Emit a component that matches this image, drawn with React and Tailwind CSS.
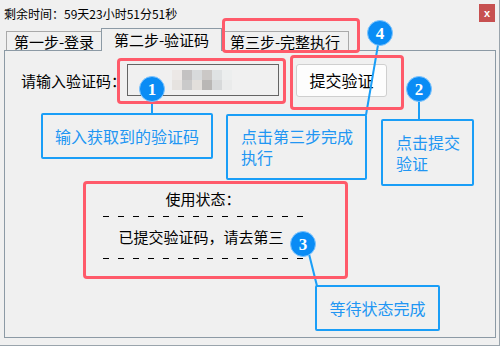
import React from 'react';

const cjk = { fontFamily: '"Noto Sans CJK SC", "Noto Sans", sans-serif' };

const mosaic = [
  ['#ece8e6', '#c4c2c2', '#d8dadb', '#cbc8c6', '#dfe2e3', '#eceeee'],
  ['#e6e3e0', '#cacaca', '#e2dfdb', '#b9b7b5', '#d7d9da', '#eaebeb'],
];

const Dashes = () => (
  <div className="flex justify-between items-end h-[6px] w-[200px]">
    {Array.from({ length: 14 }).map((_, i) => (
      <span key={i} className="block w-[6px] h-px bg-black" />
    ))}
  </div>
);

const Badge = ({ n, className }) => (
  <div
    className={`absolute w-[26px] h-[26px] rounded-full bg-[#0a8cf5] border border-[#7cc4ff] text-white text-[17px] font-bold flex items-center justify-center leading-none ${className}`}
    style={{ fontFamily: '"Liberation Serif", serif' }}
  >
    {n}
  </div>
);

export default function App() {
  return (
    <div
      className="relative w-[500px] h-[346px] bg-[#f0f0f0] overflow-hidden text-black flex flex-col border-r border-b border-[#9aa4ac]"
      style={cjk}
    >
      {/* title bar */}
      <div className="flex justify-between items-start h-[28px] pl-[4px] pr-[4px]">
        <span className="text-[12px] leading-none mt-[8px]">剩余时间：59天23小时51分51秒</span>
        <div className="mt-[4px] w-[16px] h-[18px] bg-[#c75050] text-white text-[11px] font-bold flex items-center justify-center leading-none" style={{ fontFamily: '"Liberation Sans", sans-serif' }}>
          x
        </div>
      </div>

      {/* tabs */}
      <div className="flex items-end h-[22px] pl-[6px] relative z-10">
        <div className="w-[96px] h-[19px] border border-b-0 border-[#a9a9a9] text-[15px] leading-none flex items-center justify-center pt-[1px]">
          第一步-登录
        </div>
        <div className="w-[121px] h-[23px] -mb-px ml-[-1px] border border-b-0 border-[#8c9aa5] bg-[#f0f0f0] text-[15px] leading-none flex items-center justify-center pb-[2px]">
          第二步-验证码
        </div>
        <div className="w-[127px] h-[19px] border border-l-0 border-b-0 border-[#a9a9a9] text-[15px] leading-none flex items-center justify-center pt-[1px]">
          第三步-完整执行
        </div>
      </div>

      {/* panel */}
      <div className="mx-[4px] w-[492px] h-[288px] border border-[#8c9aa5] flex flex-col">
        <div className="flex items-center mt-[12px] h-[34px] pl-[16px]">
          <span className="w-[106px] text-[15px] leading-none">请输入验证码：</span>
          <div className="w-[152px] h-[32px] border border-[#646464] bg-[#f0f0f0] flex items-center pl-[44px]">
            <div className="flex flex-col blur-[0.6px]">
              {mosaic.map((row, r) => (
                <div key={r} className="flex">
                  {row.map((c, i) => (
                    <span key={i} className="block w-[10px] h-[10px]" style={{ background: c }} />
                  ))}
                </div>
              ))}
            </div>
          </div>
          <button className="ml-[17px] w-[91px] h-[33px] bg-[#fdfdfd] border border-[#cfcfcf] rounded-[3px] text-[16px] leading-none">
            提交验证
          </button>
        </div>

        <div className="ml-[98px] w-[200px] mt-[92px] flex flex-col items-center">
          <div className="h-[20px] text-[15px] leading-[20px]">使用状态：</div>
          <div className="mt-[2px]"><Dashes /></div>
          <div className="mt-[10px] h-[20px] text-[15px] leading-[20px] pr-[4px]">已提交验证码，请去第三</div>
          <div className="mt-[6px]"><Dashes /></div>
        </div>
      </div>

      {/* annotation overlay */}
      <svg className="absolute left-0 top-0 z-20" width="500" height="346">
        <g stroke="#1a9ef7" strokeWidth="2">
          <line x1="152" y1="100" x2="152" y2="114" />
          <line x1="419" y1="100" x2="419" y2="120" />
          <line x1="309" y1="254" x2="317" y2="286" />
          <line x1="378" y1="45" x2="366" y2="115" />
        </g>
      </svg>

      <div className="absolute z-20 left-[222px] top-[18px] w-[138px] h-[35px] border-[3px] border-[#ff5a6a] rounded-[4px]" />
      <div className="absolute z-20 left-[117px] top-[58px] w-[169px] h-[46px] border-[3px] border-[#ff5a6a] rounded-[4px]" />
      <div className="absolute z-20 left-[290px] top-[55px] w-[114px] h-[55px] border-[3px] border-[#ff5a6a] rounded-[4px]" />
      <div className="absolute z-20 left-[83px] top-[181px] w-[265px] h-[98px] border-[3px] border-[#ff5a6a] rounded-[4px]" />

      <div className="absolute z-20 left-[41px] top-[113px] w-[172px] h-[46px] border-2 border-[#1a9ef7] rounded-[2px] flex items-center justify-center text-[16px] text-[#2196f3] leading-none">
        输入获取到的验证码
      </div>
      <div className="absolute z-20 left-[226px] top-[114px] w-[141px] h-[66px] border-2 border-[#1a9ef7] rounded-[2px] pl-[13px] pt-[12px] flex flex-col gap-[5px] text-[16px] text-[#2196f3] leading-none">
        <span>点击第三步完成</span>
        <span>执行</span>
      </div>
      <div className="absolute z-20 left-[381px] top-[119px] w-[93px] h-[67px] border-2 border-[#1a9ef7] rounded-[2px] pl-[13px] pt-[13px] flex flex-col gap-[5px] text-[16px] text-[#2196f3] leading-none">
        <span>点击提交</span>
        <span>验证</span>
      </div>
      <div className="absolute z-20 left-[315px] top-[285px] w-[125px] h-[46px] border-2 border-[#1a9ef7] rounded-[2px] flex items-center justify-center text-[16px] text-[#2196f3] leading-none">
        等待状态完成
      </div>

      <Badge n="1" className="z-30 left-[139px] top-[76px]" />
      <Badge n="2" className="z-30 left-[406px] top-[76px]" />
      <Badge n="3" className="z-30 left-[290px] top-[231px]" />
      <Badge n="4" className="z-30 left-[367px] top-[20px]" />
    </div>
  );
}
